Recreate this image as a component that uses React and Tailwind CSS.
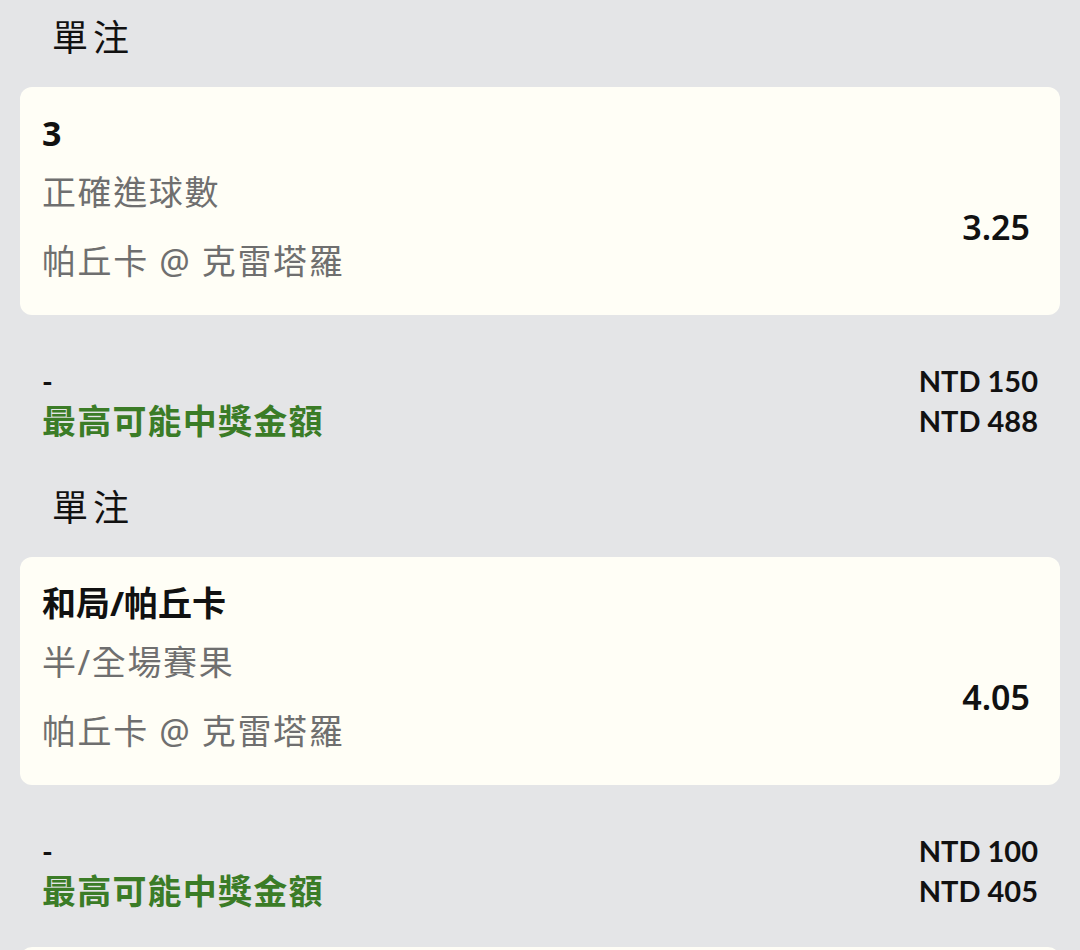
import React from "react";

const bets = [
  {
    pick: "3",
    market: "正確進球數",
    match: "帕丘卡 @ 克雷塔羅",
    odds: "3.25",
    stake: "NTD 150",
    payout: "NTD 488",
  },
  {
    pick: "和局/帕丘卡",
    market: "半/全場賽果",
    match: "帕丘卡 @ 克雷塔羅",
    odds: "4.05",
    stake: "NTD 100",
    payout: "NTD 405",
  },
];

const cjk = "font-['Noto_Sans','Noto_Sans_CJK_TC',sans-serif]";
const lato = "font-['Lato','Noto_Sans_CJK_TC',sans-serif]";

function BetSection({ bet }) {
  return (
    <div>
      <div className={`pl-[52px] pt-[21px] pb-[32px] text-[36px] leading-[34px] tracking-[5px] text-[#111] ${cjk}`}>
        單注
      </div>

      <div className={`mx-[20px] h-[228px] rounded-[12px] bg-[#fffef6] pl-[22px] pr-[30px] pt-[26px] ${cjk}`}>
        <div className="text-[34px] leading-[40px] font-bold text-[#111]">{bet.pick}</div>
        <div className="mt-[19px] flex items-center justify-between">
          <div className="text-[34px] leading-[40px] tracking-[1.6px] text-[#6f6f6f]">
            <div>{bet.market}</div>
            <div className="mt-[29px]">{bet.match}</div>
          </div>
          <div className="text-[34px] leading-[40px] font-semibold text-[#111]">{bet.odds}</div>
        </div>
      </div>

      <div className="px-[42px] pt-[46px] pb-[29px]">
        <div className="flex h-[40px] items-center justify-between">
          <span className={`text-[29px] font-bold text-[#111] ${lato}`}>-</span>
          <span className={`text-[29px] font-bold text-[#111] ${lato}`}>{bet.stake}</span>
        </div>
        <div className="flex h-[40px] items-center justify-between">
          <span className={`text-[34px] font-bold tracking-[1.2px] text-[#3b7c27] ${cjk}`}>最高可能中獎金額</span>
          <span className={`text-[29px] font-bold text-[#111] ${lato}`}>{bet.payout}</span>
        </div>
      </div>
    </div>
  );
}

export default function App() {
  return (
    <div className="h-[950px] w-[1080px] overflow-hidden bg-[#e4e5e7]">
      {bets.map((b, i) => (
        <BetSection key={i} bet={b} />
      ))}
      <div className="mx-[20px] mt-[7px] h-[100px] rounded-[12px] bg-[#fffef6]" />
    </div>
  );
}
